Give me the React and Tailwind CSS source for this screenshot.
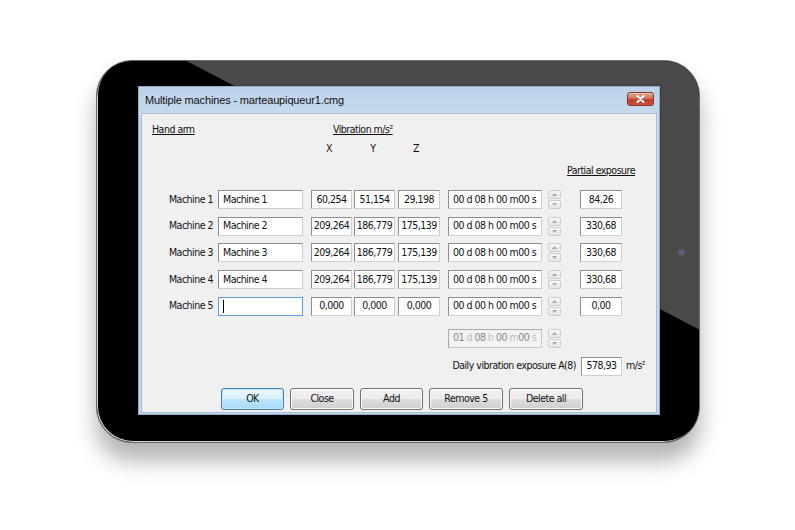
import { useState } from "react";

const narrow =
  "font-['DejaVu_Sans_Condensed','Liberation_Sans',sans-serif] tracking-[-0.5px]";

const machines = [
  { label: "Machine 1", name: "Machine 1", x: "60,254", y: "51,154", z: "29,198", time: "00 d 08 h 00 m00 s", partial: "84,26" },
  { label: "Machine 2", name: "Machine 2", x: "209,264", y: "186,779", z: "175,139", time: "00 d 08 h 00 m00 s", partial: "330,68" },
  { label: "Machine 3", name: "Machine 3", x: "209,264", y: "186,779", z: "175,139", time: "00 d 08 h 00 m00 s", partial: "330,68" },
  { label: "Machine 4", name: "Machine 4", x: "209,264", y: "186,779", z: "175,139", time: "00 d 08 h 00 m00 s", partial: "330,68" },
  { label: "Machine 5", name: "", x: "0,000", y: "0,000", z: "0,000", time: "00 d 00 h 00 m00 s", partial: "0,00", focused: true },
];

const buttons = [
  { label: "OK", width: "w-[63px]", primary: true },
  { label: "Close", width: "w-[64px]" },
  { label: "Add", width: "w-[63px]" },
  { label: "Remove 5", width: "w-[74px]" },
  { label: "Delete all", width: "w-[74px]" },
];

const Field = ({ className = "", children }) => (
  <div
    className={`flex h-[19px] shrink-0 items-center overflow-hidden whitespace-nowrap border border-[#cfcfcf] border-l-[#8e8e8e] border-t-[#8e8e8e] bg-white text-[10.5px] text-[#111] ${className}`}
  >
    {children}
  </div>
);

const Spinner = () => (
  <div className="ml-[6px] flex h-[19px] w-[13px] shrink-0 flex-col gap-px">
    <div className="flex flex-1 items-center justify-center rounded-[2px] border border-[#cdcdcd] bg-[linear-gradient(#f7f7f7,#e6e6e6)]">
      <svg height="3" viewBox="0 0 5 3" width="5">
        <path d="M2.5 0L5 3H0z" fill="#a9a9a9" />
      </svg>
    </div>
    <div className="flex flex-1 items-center justify-center rounded-[2px] border border-[#cdcdcd] bg-[linear-gradient(#f7f7f7,#e6e6e6)]">
      <svg height="3" viewBox="0 0 5 3" width="5">
        <path d="M0 0H5L2.5 3z" fill="#a9a9a9" />
      </svg>
    </div>
  </div>
);

const MachineRow = ({ m }) => (
  <div className="flex h-[19px] items-center">
    <span className="w-[71px] shrink-0 text-right text-[10.5px]">{m.label}</span>
    {m.focused ? (
      <div className="ml-[5px] flex h-[19px] w-[85px] shrink-0 items-center border border-[#569de5] bg-white pl-[4px]">
        <span className="h-[13px] w-px bg-black" />
      </div>
    ) : (
      <Field className="ml-[5px] w-[85px] pl-[4px]">{m.name}</Field>
    )}
    <Field className="ml-[8px] w-[41px] justify-center">{m.x}</Field>
    <Field className="ml-[2px] w-[41px] justify-center">{m.y}</Field>
    <Field className="ml-[3px] w-[42px] justify-center">{m.z}</Field>
    <Field className="ml-[8px] w-[94px] pl-[4px]">{m.time}</Field>
    <Spinner />
    <Field className="ml-[19px] w-[42px] justify-center">{m.partial}</Field>
  </div>
);

const Dialog = () => {
  const [rows] = useState(machines);

  return (
    <div className="relative z-10 flex h-[329px] w-[522px] flex-col border border-[#8fa9c6] bg-[#c4d8ee] shadow-[0_0_3px_rgba(0,0,0,0.35)]">
      <div className="flex h-[26px] shrink-0 items-center justify-between bg-[linear-gradient(#bcd2ea,#c6d9ee)] pl-[6px] pr-[5px]">
        <span className="font-['Liberation_Sans',sans-serif] text-[11px] tracking-[-0.15px] text-[#111]">
          Multiple machines - marteaupiqueur1.cmg
        </span>
        <button
          className="-mt-[2px] flex h-[14px] w-[27px] items-center justify-center rounded-[3px] border border-[#83382b] bg-[linear-gradient(#e5a392,#d0735f_45%,#bd3f29_55%,#c9563e)] shadow-[inset_0_1px_0_rgba(255,255,255,0.4)]"
          type="button"
        >
          <svg height="8" viewBox="0 0 9 8" width="9">
            <path d="M1.5 1L7.5 7M7.5 1L1.5 7" stroke="#fff" strokeLinecap="round" strokeWidth="2" />
          </svg>
        </button>
      </div>

      <div className={`mx-[2px] mb-[1px] flex flex-1 flex-col border border-[#aebfd3] bg-[#f0f0f0] pt-[9px] text-[#111] ${narrow}`}>
        <div className="flex h-[14px] items-center text-[10.5px]">
          <span className="w-[191px] shrink-0 pl-[10px]">
            <span className="underline">Hand arm</span>
          </span>
          <span className="underline">Vibration m/s²</span>
        </div>
        <div className="mt-[5px] flex h-[14px] items-center text-[10.5px]">
          <span className="ml-[177px] w-[20px] text-center">X</span>
          <span className="ml-[24px] w-[20px] text-center">Y</span>
          <span className="ml-[23px] w-[20px] text-center">Z</span>
        </div>
        <div className="mt-[8px] flex h-[14px] items-center text-[10.5px]">
          <span className="ml-[425px] underline">Partial exposure</span>
        </div>

        <div className="mt-[12px] flex flex-col gap-[7.7px]">
          {rows.map((m) => (
            <MachineRow key={m.label} m={m} />
          ))}
        </div>

        <div className="mt-[13px] flex h-[19px] items-center">
          <div className="ml-[306px] flex h-[19px] w-[94px] shrink-0 items-center whitespace-nowrap border border-[#c8c8c8] border-l-[#a9a9a9] border-t-[#a9a9a9] bg-[#f2f2f2] pl-[4px] text-[10.5px]">
            <span className="text-[#8a8a8a]">01</span>
            <span className="text-[#bdbdbd]">&nbsp;d&nbsp;</span>
            <span className="text-[#8a8a8a]">08</span>
            <span className="text-[#bdbdbd]">&nbsp;h&nbsp;</span>
            <span className="text-[#8a8a8a]">00</span>
            <span className="text-[#bdbdbd]">&nbsp;m</span>
            <span className="text-[#8a8a8a]">00</span>
            <span className="text-[#bdbdbd]">&nbsp;s</span>
          </div>
          <Spinner />
        </div>

        <div className="mt-[9px] flex h-[19px] items-center text-[10.5px]">
          <span className="w-[434px] shrink-0 text-right">Daily vibration exposure A(8)</span>
          <Field className="ml-[5px] w-[41px] justify-center">578,93</Field>
          <span className="ml-[4px]">m/s²</span>
        </div>

        <div className="mt-[12px] flex items-center gap-[6px] pl-[79px]">
          {buttons.map((b) => (
            <button
              className={`flex h-[22px] ${b.width} items-center justify-center rounded-[3px] border text-[10.5px] text-[#111] ${
                b.primary
                  ? "border-[#3c7fb1] bg-[linear-gradient(#eaf6fd,#d9f0fc_50%,#bee6fd_51%,#a7d9f5)] shadow-[inset_0_0_0_1px_#c5e8fb]"
                  : "border-[#707070] bg-[linear-gradient(#f2f2f2,#ebebeb_50%,#dddddd_51%,#cfcfcf)] shadow-[inset_0_0_0_1px_#fcfcfc]"
              }`}
              key={b.label}
              type="button"
            >
              {b.label}
            </button>
          ))}
        </div>
      </div>
    </div>
  );
};

const App = () => (
  <div className="h-[530px] w-[795px] overflow-hidden bg-white pl-[96px] pt-[60px]">
    <div className="relative flex h-[383px] w-[604px] items-start overflow-hidden rounded-[36px] border border-[#6a6a6a] bg-black pl-[41px] pt-[25px] shadow-[0_18px_22px_rgba(0,0,0,0.3),inset_1px_-1px_0_#cfcfcf]">
      <svg
        className="absolute inset-0 h-full w-full"
        preserveAspectRatio="none"
        viewBox="0 0 604 383"
      >
        <polygon fill="#4a4a4a" points="90,0 604,0 604,270" />
      </svg>
      <Dialog />
      <div className="absolute left-[581px] top-[188px] flex h-[7px] w-[7px] items-center justify-center rounded-full bg-[#5e5e5e]">
        <div className="h-[3px] w-[3px] rounded-full bg-[#4b5aa8]" />
      </div>
    </div>
  </div>
);

export default App;
